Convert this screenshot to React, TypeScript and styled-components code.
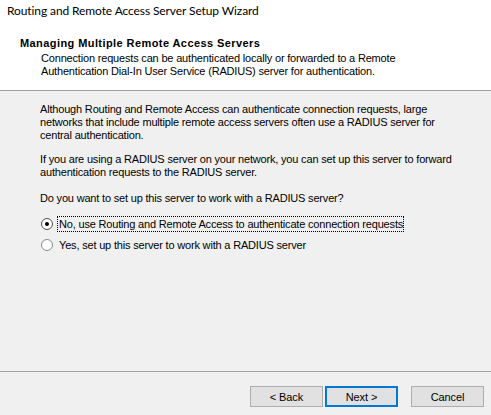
import React, { useState } from 'react'
import styled, { createGlobalStyle } from 'styled-components'

const GlobalStyle = createGlobalStyle`
  html, body {
    margin: 0;
    padding: 0;
    background: #f0f0f0;
  }
  body {
    font-family: "Liberation Sans", Arial, sans-serif;
    font-size: 11px;
    letter-spacing: -0.18px;
    color: #000;
  }
`

const Wizard = styled.div`
  width: 491px;
  height: 415px;
  display: flex;
  flex-direction: column;
  background: #f0f0f0;
  overflow: hidden;
`

const Header = styled.div`
  box-sizing: border-box;
  height: 91px;
  background: #fff;
  border-bottom: 1px solid #a0a0a0;
  display: flex;
  flex-direction: column;
`

const Title = styled.div`
  font-family: Lato, "Noto Sans", sans-serif;
  font-size: 12px;
  letter-spacing: -0.1px;
  line-height: 16px;
  padding: 3px 0 0 7px;
  white-space: nowrap;
`

const Heading = styled.div`
  font-weight: bold;
  letter-spacing: 0.42px;
  line-height: 13px;
  margin: 18px 0 0 20px;
`

const SubText = styled.div`
  line-height: 13px;
  margin: 2px 0 0 41px;
`

const Body = styled.div`
  flex: 1;
  padding: 12px 0 0 40px;
  display: flex;
  flex-direction: column;
`

const Para = styled.p<{ $gap: number }>`
  margin: ${p => p.$gap}px 0 0;
  line-height: 13px;
  white-space: nowrap;
`

const Options = styled.div`
  display: flex;
  flex-direction: column;
  gap: 5px;
  margin-top: 11px;
`

const Option = styled.label`
  display: flex;
  align-items: center;
  height: 16px;
  cursor: default;
`

const Circle = styled.span<{ $on: boolean }>`
  box-sizing: border-box;
  width: 12px;
  height: 12px;
  margin-left: 1px;
  border-radius: 50%;
  border: 1px solid ${p => (p.$on ? '#555' : '#8a8a8a')};
  background: #fff;
  display: flex;
  align-items: center;
  justify-content: center;

  &::after {
    content: '';
    width: 4px;
    height: 4px;
    border-radius: 50%;
    background: ${p => (p.$on ? '#000' : 'transparent')};
  }
`

const OptionText = styled.span<{ $focus: boolean }>`
  margin-left: 4px;
  padding: 0 0 0 1px;
  height: 16px;
  line-height: 14px;
  box-sizing: border-box;
  border: 1px dotted ${p => (p.$focus ? '#000' : 'transparent')};
  white-space: nowrap;
`

const Footer = styled.div`
  box-sizing: border-box;
  height: 44px;
  border-top: 1px solid #a0a0a0;
  display: flex;
  justify-content: flex-end;
  padding: 14px 7px 0 0;
`

const Button = styled.button<{ $primary?: boolean; $gap?: number }>`
  box-sizing: border-box;
  width: 73px;
  height: 21px;
  margin-left: ${p => p.$gap ?? 0}px;
  font-family: "Liberation Sans", Arial, sans-serif;
  font-size: 11px;
  letter-spacing: -0.1px;
  color: #000;
  background: #e1e1e1;
  border: ${p => (p.$primary ? '2px solid #0078d7' : '1px solid #adadad')};
  padding: 0;
`

const options = [
  'No, use Routing and Remote Access to authenticate connection requests',
  'Yes, set up this server to work with a RADIUS server',
]

export default function App() {
  const [choice, setChoice] = useState(0)

  return (
    <>
      <GlobalStyle />
      <Wizard>
        <Header>
          <Title>Routing and Remote Access Server Setup Wizard</Title>
          <Heading>Managing Multiple Remote Access Servers</Heading>
          <SubText>
            Connection requests can be authenticated locally or forwarded to a Remote
            <br />
            Authentication Dial-In User Service (RADIUS) server for authentication.
          </SubText>
        </Header>
        <Body>
          <Para $gap={0}>
            Although Routing and Remote Access can authenticate connection requests, large
            <br />
            networks that include multiple remote access servers often use a RADIUS server for
            <br />
            central authentication.
          </Para>
          <Para $gap={11}>
            If you are using a RADIUS server on your network, you can set up this server to forward
            <br />
            authentication requests to the RADIUS server.
          </Para>
          <Para $gap={13}>Do you want to set up this server to work with a RADIUS server?</Para>
          <Options>
            {options.map((text, i) => (
              <Option key={i} onClick={() => setChoice(i)}>
                <Circle $on={choice === i} />
                <OptionText $focus={choice === i}>{text}</OptionText>
              </Option>
            ))}
          </Options>
        </Body>
        <Footer>
          <Button>&lt; Back</Button>
          <Button $primary $gap={2}>Next &gt;</Button>
          <Button $gap={13}>Cancel</Button>
        </Footer>
      </Wizard>
    </>
  )
}
